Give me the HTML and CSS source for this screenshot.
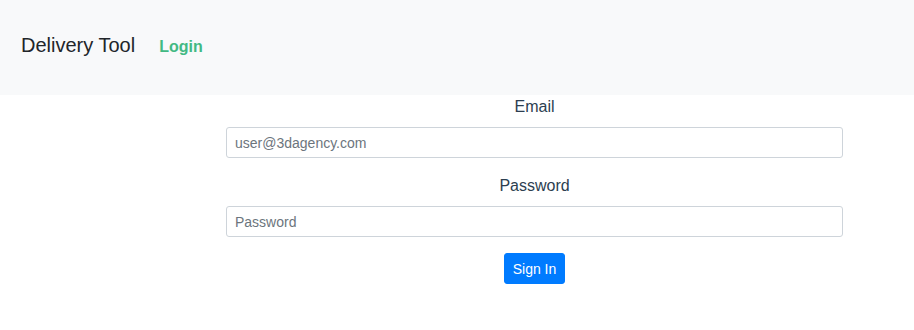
FILE: index.html
```html
<!DOCTYPE html>
<html lang="en">
<head>
  <meta charset="UTF-8" />
  <meta name="viewport" content="width=device-width, initial-scale=1.0"/>
  <title>Delivery Tool</title>
  <link rel="stylesheet" href="styles.css">
</head>
<body>
  <div id="app">
    <!-- Top nav -->
    <nav class="dt-navbar">
      <a class="dt-brand" href="#">Delivery Tool</a>
      <a class="dt-nav-link active" href="#">Login</a>
    </nav>

    <!-- Login form -->
    <form class="dt-login" onsubmit="return false;">
      <div class="dt-form-group">
        <label for="email">Email</label>
        <input type="email" id="email" class="dt-input" placeholder="user@3dagency.com" />
      </div>
      <div class="dt-form-group">
        <label for="password">Password</label>
        <input type="password" id="password" class="dt-input" placeholder="Password" />
      </div>
      <button type="submit" class="dt-btn">Sign In</button>
    </form>
  </div>
</body>
</html>
```

FILE: styles.css
```css
:root {
  --dt-green: #42b983;
  --dt-text: #2c3e50;
  --dt-blue: #007bff;
}

body {
  margin: 0;
  font-family: "Liberation Sans", Arial, sans-serif;
  font-size: 16px;
  line-height: 1.5;
  color: #212529;
  background: #fff;
}

.dt-navbar {
  display: flex;
  align-items: baseline;
  box-sizing: border-box;
  height: 95px;
  padding: 25px 21px 0;
  background: #f8f9fa;
}

.dt-brand {
  font-size: 20px;
  line-height: 30px;
  padding: 5px 0;
  color: #212529;
  text-decoration: none;
  margin-right: 24px;
}

.dt-nav-link {
  font-weight: bold;
  font-size: 16px;
  color: var(--dt-text);
  text-decoration: none;
}

.dt-nav-link.active {
  color: var(--dt-green);
}

.dt-login {
  width: 617px;
  margin-left: 226px;
  text-align: center;
}

.dt-form-group {
  margin-bottom: 16px;
}

.dt-form-group label {
  display: block;
  margin-bottom: 8px;
  line-height: 24px;
  color: var(--dt-text);
}

.dt-input {
  display: block;
  box-sizing: border-box;
  width: 100%;
  height: 31px;
  padding: 4px 8px;
  font-family: inherit;
  font-size: 14px;
  color: #495057;
  background: #fff;
  border: 1px solid #ced4da;
  border-radius: 3px;
}

.dt-input::placeholder {
  color: #6c757d;
}

.dt-btn {
  height: 31px;
  padding: 4px 8px;
  font-family: inherit;
  font-size: 14px;
  color: #fff;
  background: var(--dt-blue);
  border: 1px solid var(--dt-blue);
  border-radius: 3px;
  cursor: pointer;
}
```
